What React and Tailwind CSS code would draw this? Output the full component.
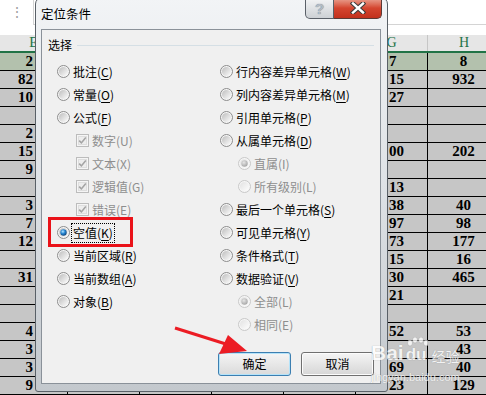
import React from 'react';

const rows = [
  { e: '2', g: '7', h: '8', hl: true },
  { e: '82', g: '15', h: '932' },
  { e: '10', g: '27', h: '' },
  { e: '', g: '', h: '' },
  { e: '2', g: '', h: '' },
  { e: '15', g: '00', h: '202' },
  { e: '9', g: '', h: '' },
  { e: '', g: '13', h: '' },
  { e: '3', g: '38', h: '40' },
  { e: '7', g: '97', h: '98' },
  { e: '12', g: '73', h: '177' },
  { e: '', g: '15', h: '16' },
  { e: '31', g: '30', h: '465' },
  { e: '', g: '21', h: '' },
  { e: '', g: '', h: '' },
  { e: '4', g: '52', h: '53' },
  { e: '3', g: '', h: '43' },
  { e: '3', g: '69', h: '40' },
  { e: '9', g: '23', h: '129' },
];

const leftOpts = [
  { label: '批注', k: 'C' },
  { label: '常量', k: 'O' },
  { label: '公式', k: 'F' },
  { label: '数字', k: 'U', type: 'check', disabled: true, indent: true },
  { label: '文本', k: 'X', type: 'check', disabled: true, indent: true },
  { label: '逻辑值', k: 'G', type: 'check', disabled: true, indent: true },
  { label: '错误', k: 'E', type: 'check', disabled: true, indent: true },
  { label: '空值', k: 'K', checked: true, focus: true },
  { label: '当前区域', k: 'R' },
  { label: '当前数组', k: 'A' },
  { label: '对象', k: 'B' },
];

const rightOpts = [
  { label: '行内容差异单元格', k: 'W' },
  { label: '列内容差异单元格', k: 'M' },
  { label: '引用单元格', k: 'P' },
  { label: '从属单元格', k: 'D' },
  { label: '直属', k: 'I', disabled: true, checked: true, sub: true },
  { label: '所有级别', k: 'L', disabled: true, sub: true },
  { label: '最后一个单元格', k: 'S' },
  { label: '可见单元格', k: 'Y' },
  { label: '条件格式', k: 'T' },
  { label: '数据验证', k: 'V' },
  { label: '全部', k: 'L', disabled: true, checked: true, sub: true },
  { label: '相同', k: 'E', disabled: true, sub: true },
];

const Radio = ({ checked, disabled }) => (
  <svg width="13" height="13" viewBox="0 0 13 13" className="shrink-0">
    <defs>
      <linearGradient id={disabled ? 'rdis' : 'ren'} x1="0" y1="0" x2="1" y2="1">
        <stop offset="0" stopColor={disabled ? '#e2e2e2' : '#bdbdbd'} />
        <stop offset="1" stopColor="#fdfdfd" />
      </linearGradient>
      <radialGradient id="rdot" cx="0.4" cy="0.35" r="0.7">
        <stop offset="0" stopColor="#b8e6ff" />
        <stop offset="0.45" stopColor="#2a8ad6" />
        <stop offset="1" stopColor="#0b3e74" />
      </radialGradient>
      <radialGradient id="rdotd" cx="0.4" cy="0.35" r="0.7">
        <stop offset="0" stopColor="#e6e6e6" />
        <stop offset="1" stopColor="#a2a2a2" />
      </radialGradient>
    </defs>
    <circle cx="6.5" cy="6.5" r="6" fill="#f6f6f6" stroke={disabled ? '#c8c8c8' : '#8c8c8c'} />
    <circle cx="6.5" cy="6.5" r="4.6" fill={disabled ? 'url(#rdis)' : 'url(#ren)'} />
    {checked && <circle cx="6.5" cy="6.5" r="3.2" fill={disabled ? 'url(#rdotd)' : 'url(#rdot)'} />}
  </svg>
);

const Check = () => (
  <svg width="13" height="13" viewBox="0 0 13 13" className="shrink-0">
    <rect x="0.5" y="0.5" width="12" height="12" fill="#f5f5f5" stroke="#bcbcbc" />
    <rect x="2.5" y="2.5" width="8" height="8" fill="#ededed" stroke="#dedede" />
    <path d="M3.2 6.6 L5.4 8.9 L9.8 3.6" stroke="#a4a4a4" strokeWidth="1.6" fill="none" />
  </svg>
);

const Opt = ({ label, k, type, checked, disabled, indent, sub, focus }) => (
  <div className={`flex items-center h-[23px] ${indent ? 'pl-[19px]' : ''} ${sub ? 'pl-[18px]' : ''}`}>
    {type === 'check' ? <Check /> : <Radio checked={checked} disabled={disabled} />}
    <span
      className={`ml-[3px] leading-[16px] whitespace-nowrap ${disabled ? 'text-[#8e8e8e]' : 'text-black'} ${
        focus ? 'outline outline-1 outline-dotted outline-black outline-offset-[1px]' : ''
      }`}
    >
      {label}(
      {disabled ? k : <span className="underline underline-offset-2">{k}</span>})
    </span>
  </div>
);

const Cell = ({ w, children, className = '' }) => (
  <div className={`h-full shrink-0 border-r border-black flex items-center ${w} ${className}`}>{children}</div>
);

export default function App() {
  return (
    <div className="relative w-[486px] h-[395px] overflow-hidden bg-white">
      {/* spreadsheet behind */}
      <div className="flex flex-col">
        <div className="flex h-[35px] bg-white">
          <div className="w-[33px] flex justify-center pt-[5px] text-[#a0a0a0] text-[14px] leading-none font-['Liberation_Sans',sans-serif]">⋮</div>
          <div className="flex-1 h-[25px] border-l border-b border-[#d4d4d4]" />
        </div>
        <div className="flex h-[18px] bg-[#e6e6e6] border-b-2 border-[#217346] text-[#217346] text-[14px] font-['Liberation_Serif',serif] leading-none">
          <div className="w-[68px] shrink-0 border-r border-[#c6c6c6] flex justify-center items-center">E</div>
          <div className="w-[72px] shrink-0 border-r border-[#c6c6c6]" />
          <div className="w-[72px] shrink-0 border-r border-[#c6c6c6]" />
          <div className="w-[72px] shrink-0 border-r border-[#c6c6c6]" />
          <div className="w-[72px] shrink-0 border-r border-[#c6c6c6]" />
          <div className="w-[72px] shrink-0 border-r border-[#c6c6c6] flex justify-center items-center">G</div>
          <div className="w-[72px] shrink-0 flex justify-center items-center">H</div>
        </div>
        {rows.map((r, i) => (
          <div
            key={i}
            className={`flex h-[18px] border-b border-black text-[15px] font-bold text-black leading-none font-['Liberation_Serif',serif] ${
              r.hl ? 'bg-[#b3c1ad]' : 'bg-[#c6c6c6]'
            }`}
          >
            <Cell w="w-[68px]" className="justify-end pr-[34px]">{r.e}</Cell>
            <Cell w="w-[72px]" />
            <Cell w="w-[72px]" />
            <Cell w="w-[72px]" />
            <Cell w="w-[72px]" />
            <Cell w="w-[72px]" className="pl-[33px]">{r.g}</Cell>
            <Cell w="w-[72px]" className="justify-center">{r.h}</Cell>
          </div>
        ))}
      </div>

      {/* dialog */}
      <div className="absolute left-[35px] top-[-3px] w-[353px] h-[395px] rounded-t-[7px] rounded-b-[3px] border border-[#596067] bg-gradient-to-b from-[#f2f4f6] via-[#dde1e5] to-[#c3c8cd] pl-[5px] pr-[6px] pb-[7px] flex flex-col font-['Noto_Sans_CJK_SC','Noto_Sans',sans-serif]">
        <div className="h-[31px] flex items-start shrink-0">
          <span className="self-center text-[12.5px] text-black leading-none pt-[1px]">定位条件</span>
          <div className="ml-auto flex -mr-[1px]">
            <div className="w-[29px] h-[21px] border border-t-0 border-[#5a6068] rounded-bl-[5px] bg-gradient-to-b from-[#f4f5f6] to-[#cdd1d5] flex items-center justify-center text-[15px] font-bold leading-none text-[#b4bcc6] font-['Liberation_Sans',sans-serif] [text-shadow:0_0_1px_#5d6874]">
              ?
            </div>
            <div className="w-[48px] h-[21px] border border-t-0 border-l-0 border-[#5a3a36] rounded-br-[5px] bg-gradient-to-b from-[#e9a596] via-[#d4452f] to-[#c2301c] flex items-center justify-center">
              <svg width="16" height="12" viewBox="0 0 16 12">
                <path d="M3 1.5 L13 10.5 M13 1.5 L3 10.5" stroke="#3b3b3b" strokeWidth="4.5" strokeLinecap="square" />
                <path d="M3 1.5 L13 10.5 M13 1.5 L3 10.5" stroke="#ffffff" strokeWidth="2.4" strokeLinecap="square" />
              </svg>
            </div>
          </div>
        </div>

        <div className="flex-1 border border-[#8a9199] bg-[#f0f0f0] flex flex-col pt-[8px] px-[6px] text-[12px]">
          <div className="flex items-center h-[14px]">
            <span className="leading-none text-black">选择</span>
            <div className="flex-1 ml-[5px] h-px bg-[#d5dfe5]" />
          </div>
          <div className="flex mt-[8px] pl-[9px]">
            <div className="w-[163px] flex flex-col">
              {leftOpts.map((o, i) => (
                <Opt key={i} {...o} />
              ))}
            </div>
            <div className="flex flex-col">
              {rightOpts.map((o, i) => (
                <Opt key={i} {...o} />
              ))}
            </div>
          </div>
          <div className="mt-auto mb-[7px] flex justify-end gap-[10px]">
            <button className="w-[73px] h-[24px] rounded-[3px] border border-[#3c7fb1] bg-gradient-to-b from-[#f5f5f5] to-[#dadada] shadow-[inset_0_0_0_1px_#b5e3f9] text-[12px] text-black leading-none">
              确定
            </button>
            <button className="w-[73px] h-[24px] rounded-[3px] border border-[#707070] bg-gradient-to-b from-[#f5f5f5] to-[#d6d6d6] shadow-[inset_0_0_0_1px_#fcfcfc] text-[12px] text-black leading-none">
              取消
            </button>
          </div>
        </div>
      </div>

      {/* annotation: red box */}
      <div className="absolute left-[48px] top-[217px] w-[85px] h-[30px] border-[3px] border-[#ea1219]" />

      {/* annotation: red arrow */}
      <svg className="absolute left-0 top-0" width="486" height="395" viewBox="0 0 486 395">
        <line x1="175" y1="328" x2="229" y2="345" stroke="#ec1c24" strokeWidth="3" />
        <polygon points="247,351 219,354 228,335" fill="#ec1c24" />
      </svg>

      {/* watermark */}
      <div className="absolute left-[371px] top-[342px] flex flex-col opacity-80">
        <div className="flex items-end text-white font-bold leading-none font-['Liberation_Sans',sans-serif] [text-shadow:0_0_1px_#8a8a8a]">
          <span className="text-[21px]">Bai</span>
          <span className="relative text-[17px] ml-[2px]">
            <svg className="absolute left-[1px] top-[-9px]" width="22" height="10" viewBox="0 0 22 10">
              <ellipse cx="3" cy="6" rx="2.5" ry="3" fill="#ffffff" stroke="#9a9a9a" strokeWidth="0.5" />
              <ellipse cx="8" cy="3" rx="2.5" ry="3" fill="#ffffff" stroke="#9a9a9a" strokeWidth="0.5" />
              <ellipse cx="14" cy="3" rx="2.5" ry="3" fill="#ffffff" stroke="#9a9a9a" strokeWidth="0.5" />
              <ellipse cx="19" cy="6" rx="2.5" ry="3" fill="#ffffff" stroke="#9a9a9a" strokeWidth="0.5" />
            </svg>
            du
          </span>
          <span className="ml-[5px] text-[14px] font-normal font-['Noto_Sans_CJK_SC',sans-serif]">经验</span>
        </div>
        <div className="mt-[9px] text-[11px] text-white leading-none font-['Liberation_Sans',sans-serif] [text-shadow:0_0_1px_#8a8a8a]">
          jingyan.baidu.com
        </div>
      </div>
    </div>
  );
}
